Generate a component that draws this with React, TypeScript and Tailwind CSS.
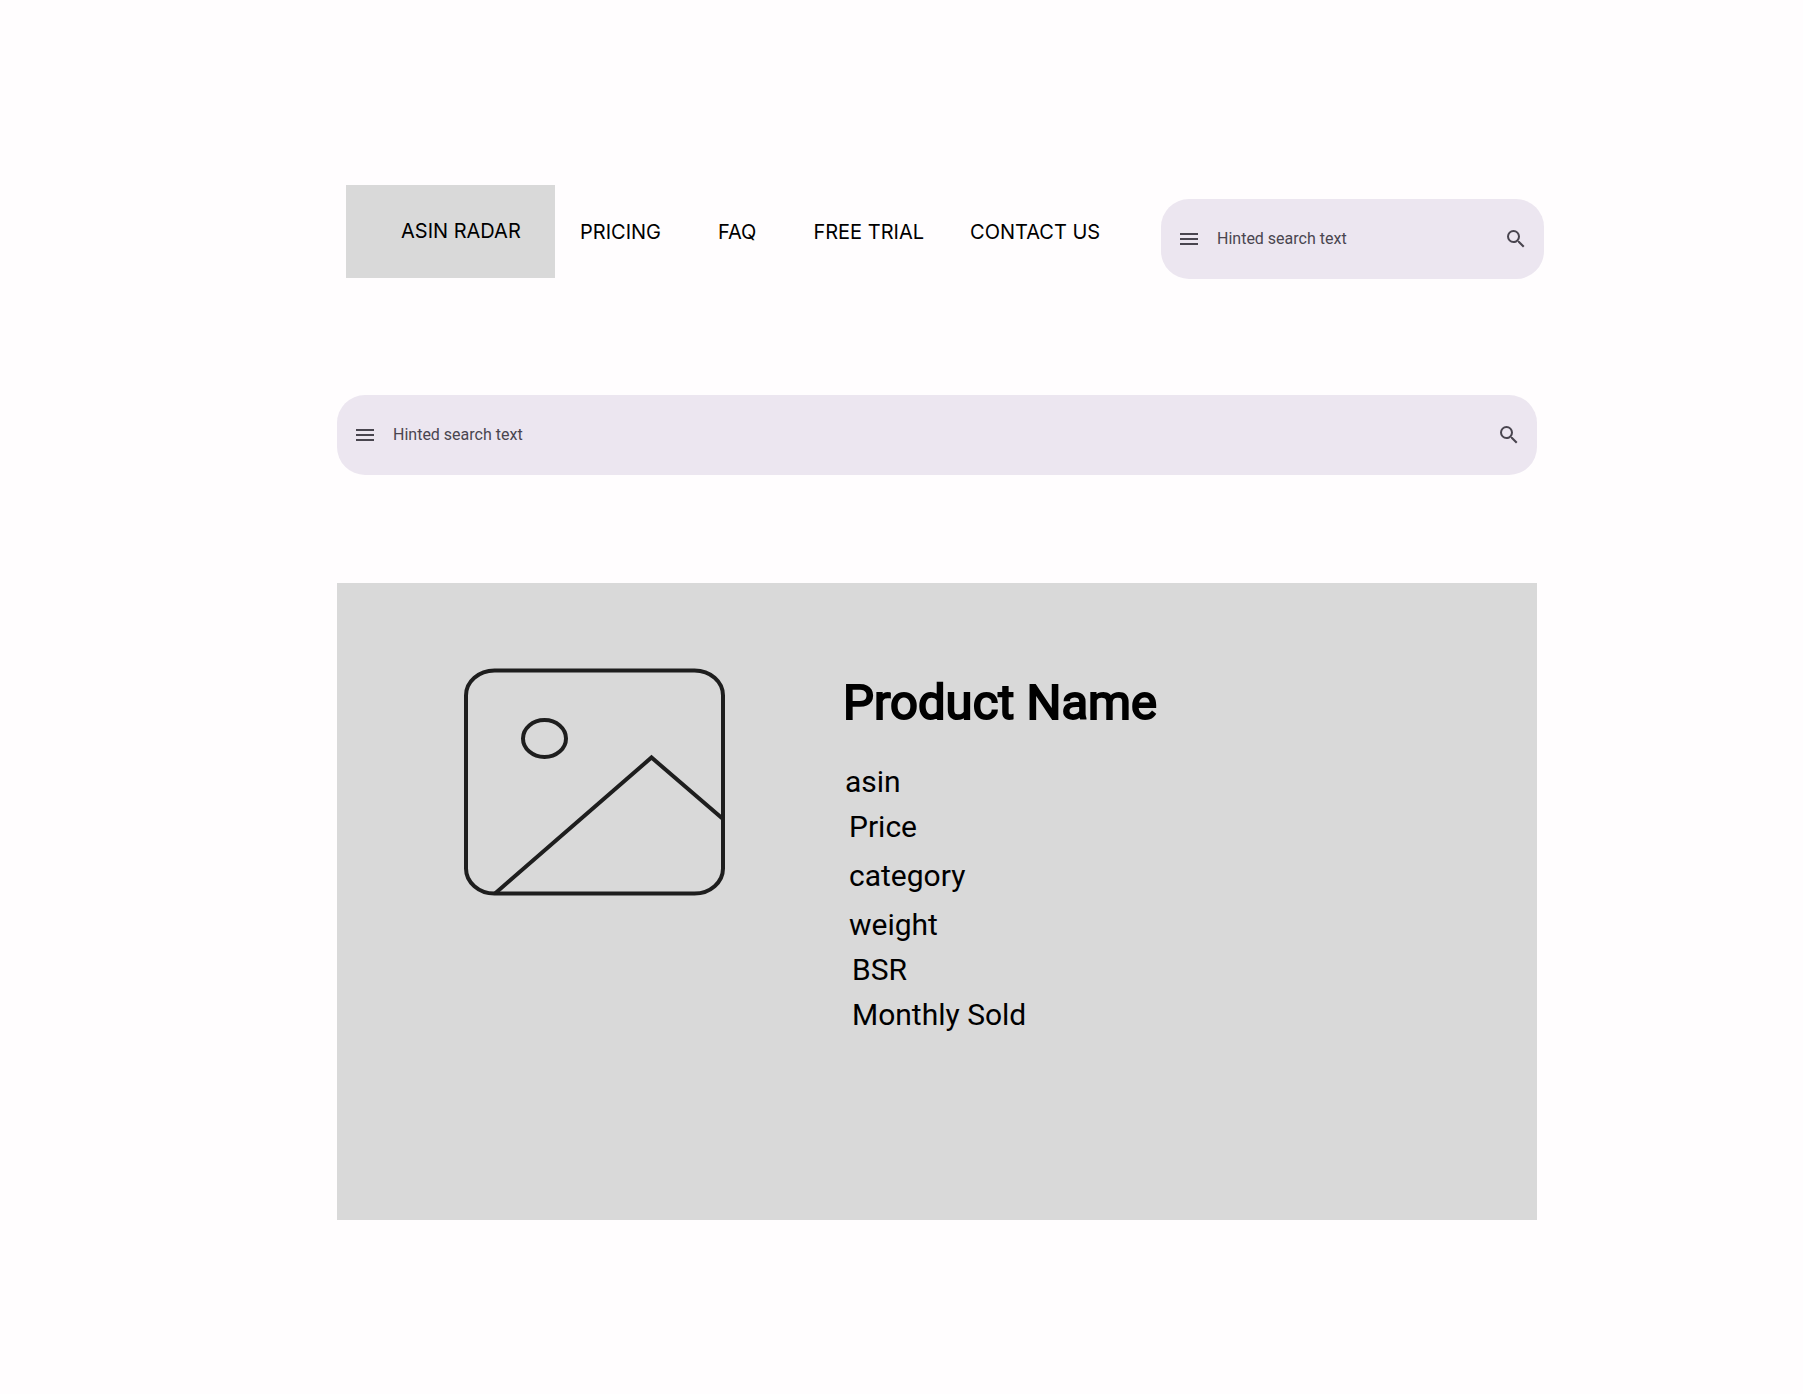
import { MdMenu, MdSearch } from "react-icons/md";

function SearchBar({ label, className = "" }: { label: string; className?: string }) {
  return (
    <form
      role="search"
      onSubmit={(e) => e.preventDefault()}
      className={`flex h-20 items-center gap-4 rounded-[28px] bg-[#ece6f0] px-4 font-['Roboto',sans-serif] text-[#49454f] ${className}`}
    >
      <button type="button" aria-label="Menu" className="shrink-0">
        <MdMenu size={24} />
      </button>
      <input
        type="text"
        aria-label={label}
        placeholder="Hinted search text"
        className="min-w-0 flex-1 bg-transparent text-base leading-6 outline-none placeholder:text-[#49454f]"
      />
      <button type="submit" aria-label="Submit search" className="shrink-0">
        <MdSearch size={24} />
      </button>
    </form>
  );
}

function PlaceholderImage() {
  return (
    <svg
      width="262"
      height="228"
      viewBox="0 0 262 228"
      fill="none"
      stroke="#1e1e1e"
      strokeWidth="4"
      role="img"
      aria-label="Product image"
      className="shrink-0"
    >
      <rect x="2" y="2.5" width="257" height="223" rx="28.5" ry="25" />
      <ellipse cx="80.5" cy="70.5" rx="21.5" ry="18.5" />
      <path d="M31 225.5 L187.5 89.5 L259 151" />
    </svg>
  );
}

export default function App() {
  return (
    <div className="min-h-screen bg-[#fffdfe] pt-[185px] pb-[174px] font-['Inter',sans-serif] text-black">
      <header className="flex items-start pr-[259px] pl-[346px]">
        <a
          href="#home"
          className="flex h-[93px] w-[209px] shrink-0 items-center bg-[#d9d9d9] pb-0.5 pl-[55px] text-xl leading-6"
        >
          ASIN RADAR
        </a>
        <nav className="flex h-[93px] items-center gap-[57px] pl-[25px] text-xl leading-6 whitespace-nowrap">
          <a href="#pricing">PRICING</a>
          <a href="#faq">FAQ</a>
          <div className="flex gap-[46px]">
            <a href="#trial">FREE TRIAL</a>
            <a href="#contact">CONTACT US</a>
          </div>
        </nav>
        <SearchBar label="Search the site" className="mt-[14px] ml-auto w-[383px]" />
      </header>

      <main className="mt-[116px] pr-[266px] pl-[337px]">
        <SearchBar label="Search products" />
        <section className="mt-[108px] flex min-h-[637px] items-start bg-[#d9d9d9] pt-[85px] pl-[127px] font-['Roboto',sans-serif]">
          <PlaceholderImage />
          <div className="ml-[117px]">
            <h1 className="text-[49px] leading-[70px] font-normal [-webkit-text-stroke:2px_black]">
              Product Name
            </h1>
            <div className="mt-[21px] pl-0.5 text-3xl leading-[45px]">
              <p>asin</p>
              <div className="flex flex-col gap-1 pl-1">
                <p>Price</p>
                <p>category</p>
                <p>weight</p>
              </div>
              <div className="pl-[7px]">
                <p>BSR</p>
                <p>Monthly Sold</p>
              </div>
            </div>
          </div>
        </section>
      </main>
    </div>
  );
}
